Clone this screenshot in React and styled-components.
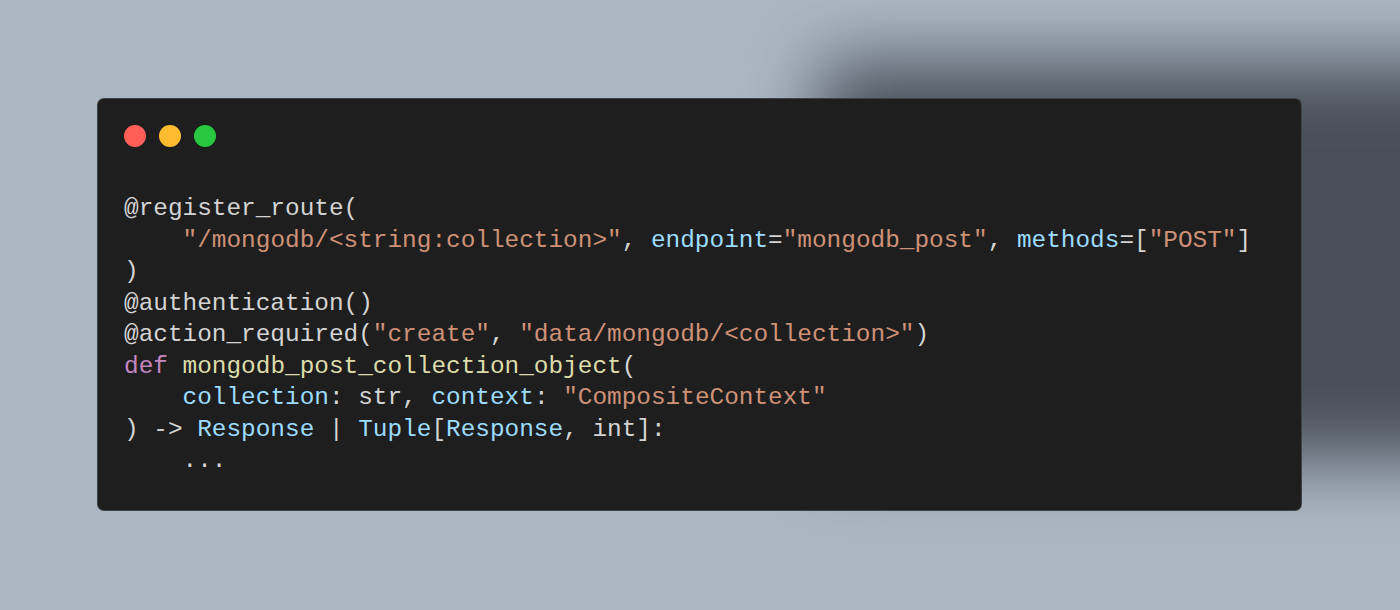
import styled, { createGlobalStyle } from 'styled-components';

const GlobalStyle = createGlobalStyle`
  html, body {
    margin: 0;
    padding: 0;
    background: #abb7c2;
  }
`;

const Page = styled.div`
  position: relative;
  width: 1400px;
  height: 610px;
  box-sizing: border-box;
  padding: 98px 98px 0 97px;
  background: #abb7c2;
  overflow: hidden;

  /* the offset drop shadow behind the right half of the window */
  &::before {
    content: '';
    position: absolute;
    left: 820px;
    right: -240px;
    top: 62px;
    bottom: 150px;
    background: rgba(62, 68, 78, 0.9);
    filter: blur(36px);
  }
`;

const Window = styled.div`
  position: relative;
  z-index: 1;
  height: 413px;
  box-sizing: border-box;
  padding: 26px 26px 0 26px;
  background: #1e1e1e;
  border: 1px solid rgba(255, 255, 255, 0.16);
  border-radius: 7px;
`;

const Lights = styled.div`
  display: flex;
  gap: 13px;
`;

const Light = styled.span`
  width: 22px;
  height: 22px;
  border-radius: 50%;
  background: ${p => p.$color};
`;

const Code = styled.pre`
  margin: 46px 0 0 0;
  font-family: "Liberation Mono", "Courier New", monospace;
  font-size: 24.4px;
  line-height: 31.5px;
  color: #d4d4d4;
  white-space: pre;
`;

const Tok = styled.span`
  color: ${p => p.$c};
`;

const STR = '#ce9178';
const PARAM = '#9cdcfe';
const KW = '#c586c0';
const FN = '#dcdcaa';
const PLAIN = '#d4d4d4';

export default function App() {
  return (
    <>
      <GlobalStyle />
      <Page>
        <Window>
          <Lights>
            <Light $color="#ff5f57" />
            <Light $color="#febc2e" />
            <Light $color="#28c840" />
          </Lights>
          <Code>
{'@register_route(\n'}
{'    '}<Tok $c={STR}>"/mongodb/&lt;string:collection&gt;"</Tok>{', '}<Tok $c={PARAM}>endpoint</Tok>=<Tok $c={STR}>"mongodb_post"</Tok>{', '}<Tok $c={PARAM}>methods</Tok>=[<Tok $c={STR}>"POST"</Tok>]{'\n'}
{')\n'}
{'@authentication()\n'}
{'@action_required('}<Tok $c={STR}>"create"</Tok>{', '}<Tok $c={STR}>"data/mongodb/&lt;collection&gt;"</Tok>{')\n'}
<Tok $c={KW}>def</Tok>{' '}<Tok $c={FN}>mongodb_post_collection_object</Tok>{'(\n'}
{'    '}<Tok $c={PARAM}>collection</Tok>{': str, '}<Tok $c={PARAM}>context</Tok>{': '}<Tok $c={STR}>"CompositeContext"</Tok>{'\n'}
{') -> '}<Tok $c={PARAM}>Response</Tok>{' | '}<Tok $c={PARAM}>Tuple</Tok>[<Tok $c={PARAM}>Response</Tok>{', int]:\n'}
{'    '}<Tok $c={PLAIN}>...</Tok>
          </Code>
        </Window>
      </Page>
    </>
  );
}
